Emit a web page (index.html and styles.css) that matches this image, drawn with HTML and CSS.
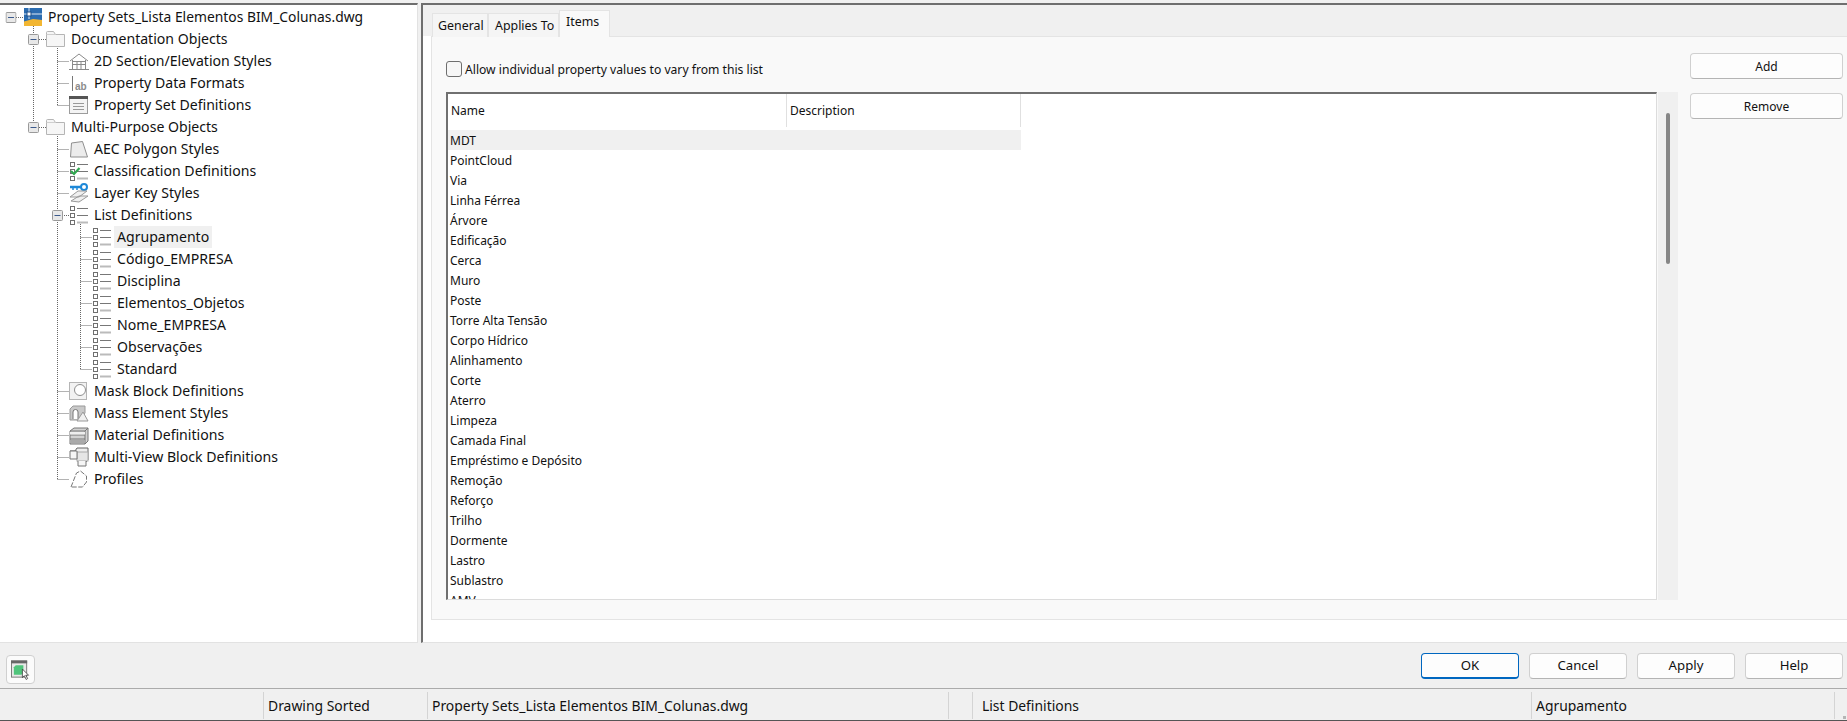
FILE: index.html
```html
<!DOCTYPE html>
<html lang="en">
<head>
<meta charset="utf-8">
<title>Style Manager</title>
<link rel="stylesheet" href="styles.css">
</head>
<body>
<svg class="defs" width="0" height="0" aria-hidden="true">
  <symbol id="i-folder" viewBox="0 0 20 16"><path d="M.5 15.5V1.5a1 1 0 0 1 1-1h6l2 3h9a1 1 0 0 1 0 0v12z" fill="#f6f6f6" stroke="#b5b5b5"/><path d="M.5 3.5h9" stroke="#cfcfcf" fill="none"/></symbol>
  <symbol id="i-list" viewBox="0 0 20 20"><g fill="#fff" stroke="#707070"><rect x="1.5" y="1.5" width="4" height="4"/><rect x="1.5" y="8.5" width="4" height="4"/><rect x="1.5" y="15.5" width="4" height="4"/></g><path d="M8 3.500h11M8 10.500h11" stroke="#777" fill="none"/><path d="M8 17.500h11" stroke="#bbb" stroke-width="2" fill="none"/></symbol>
  <symbol id="i-minus" viewBox="0 0 11 11"><rect x=".5" y=".5" width="10" height="10" rx="1" fill="#e8e8e8" stroke="#9a9a9a"/><path d="M2.500 5.500h6" stroke="#3c5a8c"/></symbol>
</svg>
<div class="app">
  <div class="main">
    <section class="tree">
      <svg class="connectors" width="100" height="490" aria-hidden="true">
        <g class="dots">
          <path d="M16 17.500h8M33.500 22v100M39 39.500h7M39 127.500h7"/>
          <path d="M57.500 48v57.500M57.500 61.500h12M57.500 83.500h12M57.500 105.500h12"/>
          <path d="M57.500 136v343.500M57.500 149.500h12M57.500 171.500h12M57.500 193.500h12M62 215.500h7M57.500 391.500h12M57.500 413.500h12M57.500 435.500h12M57.500 457.500h12M57.500 479.500h12"/>
          <path d="M80.500 224v145.500M80.500 237.500h12M80.500 259.500h12M80.500 281.500h12M80.500 303.500h12M80.500 325.500h12M80.500 347.500h12M80.500 369.500h12"/>
        </g>
        <use href="#i-minus" x="5.500" y="12" width="11" height="11"/>
        <use href="#i-minus" x="28" y="34" width="11" height="11"/>
        <use href="#i-minus" x="28" y="122" width="11" height="11"/>
        <use href="#i-minus" x="52" y="210" width="11" height="11"/>
      </svg>
      <ul class="rows">
        <li class="row lv0"><svg class="ico" viewBox="0 0 20 20"><rect width="18" height="18" y="1" fill="#2b6cb0"/><path d="M0 14.500l9-2.500 9 1v6H0z" fill="#f2b632"/><path d="M5 1v11M0 7h18" stroke="#dfe9f5" fill="none"/><rect x="3" y="5" width="4" height="4" fill="#fff" stroke="#1f4f88"/></svg><span class="lbl">Property Sets_Lista Elementos BIM_Colunas.dwg</span></li>
        <li class="row lv1"><svg class="ico"><use href="#i-folder" x="0" y="2" width="20" height="16"/></svg><span class="lbl">Documentation Objects</span></li>
        <li class="row lv2"><svg class="ico" viewBox="0 0 20 20" fill="none" stroke="#8a8a8a"><path d="M1 10l9-7 9 7M3.500 9v9M16.500 9v9M0 18.500h20M3 13.500h14M3 10.500h14M8 10v8M12 10v8" /></svg><span class="lbl">2D Section/Elevation Styles</span></li>
        <li class="row lv2"><svg class="ico" viewBox="0 0 20 20"><path d="M3.500 3v15" stroke="#777"/><text class="ab" x="6" y="17">ab</text></svg><span class="lbl">Property Data Formats</span></li>
        <li class="row lv2"><svg class="ico" viewBox="0 0 20 20"><rect x=".5" y="1.500" width="18" height="17" fill="#f4f4f4" stroke="#9c9c9c"/><rect x="0" y="1" width="19" height="3" fill="#555"/><path d="M4 8.500h11M4 11.500h11M4 14.500h11" stroke="#999"/></svg><span class="lbl">Property Set Definitions</span></li>
        <li class="row lv1"><svg class="ico"><use href="#i-folder" x="0" y="2" width="20" height="16"/></svg><span class="lbl">Multi-Purpose Objects</span></li>
        <li class="row lv2"><svg class="ico" viewBox="0 0 20 20"><path d="M1.500 18l1-14 11-1.500L18.500 18z" fill="#ececec" stroke="#8f8f8f"/></svg><span class="lbl">AEC Polygon Styles</span></li>
        <li class="row lv2"><svg class="ico" viewBox="0 0 20 20"><use href="#i-list" width="20" height="20"/><path d="M2 10l3 3 5.500-6" stroke="#2fa84f" stroke-width="2.200" fill="none"/></svg><span class="lbl">Classification Definitions</span></li>
        <li class="row lv2"><svg class="ico" viewBox="0 0 20 20"><path d="M1 4h11" stroke="#1e88d8" stroke-width="2.500"/><circle cx="15" cy="4" r="3" fill="#fff" stroke="#1e88d8" stroke-width="2"/><path d="M4 5v2M8 5v2" stroke="#1e88d8" stroke-width="1.500"/><path d="M1 14l8-6h9l-8 6zM2 18l8-5h9l-9 6z" fill="#f0f0f0" stroke="#999"/></svg><span class="lbl">Layer Key Styles</span></li>
        <li class="row lv2"><svg class="ico"><use href="#i-list" width="20" height="20"/></svg><span class="lbl">List Definitions</span></li>
        <li class="row lv3"><svg class="ico"><use href="#i-list" width="20" height="20"/></svg><span class="lbl sel">Agrupamento</span></li>
        <li class="row lv3"><svg class="ico"><use href="#i-list" width="20" height="20"/></svg><span class="lbl">Código_EMPRESA</span></li>
        <li class="row lv3"><svg class="ico"><use href="#i-list" width="20" height="20"/></svg><span class="lbl">Disciplina</span></li>
        <li class="row lv3"><svg class="ico"><use href="#i-list" width="20" height="20"/></svg><span class="lbl">Elementos_Objetos</span></li>
        <li class="row lv3"><svg class="ico"><use href="#i-list" width="20" height="20"/></svg><span class="lbl">Nome_EMPRESA</span></li>
        <li class="row lv3"><svg class="ico"><use href="#i-list" width="20" height="20"/></svg><span class="lbl">Observações</span></li>
        <li class="row lv3"><svg class="ico"><use href="#i-list" width="20" height="20"/></svg><span class="lbl">Standard</span></li>
        <li class="row lv2"><svg class="ico" viewBox="0 0 20 20"><rect x=".5" y="1.500" width="17" height="17" fill="#f2f2f2" stroke="#b5b5b5"/><circle cx="11" cy="9" r="5.500" fill="#fff" stroke="#8f8f8f"/></svg><span class="lbl">Mask Block Definitions</span></li>
        <li class="row lv2"><svg class="ico" viewBox="0 0 20 20"><path d="M1 17V6l3-3h12v7l-5 7z" fill="#c9c9c9" stroke="#999"/><path d="M4 16V9a2 2 0 0 1 5 0v7" fill="#fff" stroke="#777"/><path d="M14 9l-6 9h11z" fill="#f0f0f0" stroke="#999"/></svg><span class="lbl">Mass Element Styles</span></li>
        <li class="row lv2"><svg class="ico" viewBox="0 0 20 20"><path d="M1 6l4-3h14v13l-3 3H1z" fill="#d2d2d2" stroke="#777"/><path d="M1 6h15v13M16 6l3-3M1 10h15M1 14h15" fill="none" stroke="#777"/><rect x="1" y="7" width="15" height="2.500" fill="#eee"/><rect x="1" y="15" width="15" height="3" fill="#aaa"/></svg><span class="lbl">Material Definitions</span></li>
        <li class="row lv2"><svg class="ico" viewBox="0 0 20 20"><path d="M1 4h5l2-3h11v12l-3 3" fill="#eee" stroke="#666"/><rect x="8" y="5" width="11" height="9" fill="#e6e6e6" stroke="#aaa"/><path d="M1 4v8h7V4zM9 14v5h8v-5" fill="#f6f6f6" stroke="#777"/></svg><span class="lbl">Multi-View Block Definitions</span></li>
        <li class="row lv2"><svg class="ico" viewBox="0 0 20 20"><path d="M2 18L7.500 4l4-2 6 5v6l-4 5z" fill="#fff" stroke="#777" stroke-dasharray="5 1.500"/></svg><span class="lbl">Profiles</span></li>
      </ul>
    </section>
    <div class="divider"></div>
    <section class="detail">
      <nav class="tabs">
        <span class="tab">General</span>
        <span class="tab">Applies To</span>
        <span class="tab active">Items</span>
      </nav>
      <div class="page-wrap">
        <div class="page">
          <div class="content">
            <label class="check"><span class="box"></span>Allow individual property values to vary from this list</label>
            <div class="list-wrap">
              <div class="list">
                <div class="head"><span class="col col-name">Name</span><span class="col col-desc">Description</span></div>
                <div class="item selected">MDT</div>
                <div class="item">PointCloud</div>
                <div class="item">Via</div>
                <div class="item">Linha Férrea</div>
                <div class="item">Árvore</div>
                <div class="item">Edificação</div>
                <div class="item">Cerca</div>
                <div class="item">Muro</div>
                <div class="item">Poste</div>
                <div class="item">Torre Alta Tensão</div>
                <div class="item">Corpo Hídrico</div>
                <div class="item">Alinhamento</div>
                <div class="item">Corte</div>
                <div class="item">Aterro</div>
                <div class="item">Limpeza</div>
                <div class="item">Camada Final</div>
                <div class="item">Empréstimo e Depósito</div>
                <div class="item">Remoção</div>
                <div class="item">Reforço</div>
                <div class="item">Trilho</div>
                <div class="item">Dormente</div>
                <div class="item">Lastro</div>
                <div class="item">Sublastro</div>
                <div class="item">AMV</div>
              </div>
              <div class="scroll"><div class="thumb"></div></div>
            </div>
          </div>
          <div class="side">
            <button class="btn side-btn">Add</button>
            <button class="btn side-btn">Remove</button>
          </div>
        </div>
      </div>
    </section>
  </div>
  <footer class="footer">
    <button class="tool" aria-label="Viewer">
      <svg width="20" height="20" viewBox="0 0 20 20"><rect x=".5" y=".5" width="16" height="17" fill="#e8e8e8" stroke="#777"/><rect x="0" y="0" width="17" height="3" fill="#666"/><path d="M3 7l2-2h8v8l-2 2H3z" fill="#4fc47b"/><path d="M12 9v9l2-2 2 4 1.500-1-2-3.500h3z" fill="#fff" stroke="#333" stroke-width=".8"/></svg>
    </button>
    <div class="actions">
      <button class="btn act default">OK</button>
      <button class="btn act">Cancel</button>
      <button class="btn act">Apply</button>
      <button class="btn act">Help</button>
    </div>
  </footer>
  <div class="status">
    <span class="cell c1"></span>
    <span class="cell c2">Drawing Sorted</span>
    <span class="cell c3">Property Sets_Lista Elementos BIM_Colunas.dwg</span>
    <span class="cell c4"></span>
    <span class="cell c5">List Definitions</span>
    <span class="cell c6">Agrupamento</span>
    <span class="cell c7"><span class="grip"></span></span>
  </div>
</div>
</body>
</html>
```
FILE: styles.css
```css
* { box-sizing: border-box; }
html, body { margin: 0; padding: 0; height: 721px; overflow: hidden; background: #f0f0f0; }
body { font-family: "Noto Sans", "Open Sans", sans-serif; color: #111; }
.defs { position: absolute; }
.app { display: flex; flex-direction: column; height: 721px; padding-top: 3px; }
.main { display: flex; height: 640px; flex: none; }

/* tree */
.tree { position: relative; width: 418px; flex: none; background: #fff; border-top: 2px solid #6e6e6e; border-right: 1px solid #e2e2e2; border-bottom: 1px solid #e2e2e2; }
.connectors { position: absolute; left: 0; top: -5px; }
.dots { fill: none; stroke: #666; stroke-dasharray: 1 1; }
.rows { list-style: none; margin: 0; padding: 1px 0 0; position: relative; }
.row { display: flex; align-items: center; height: 22px; font-size: 14.1px; white-space: nowrap; }
.lv0 { padding-left: 24px; font-size: 13.85px; }
.lv1 { padding-left: 46px; }
.lv2 { padding-left: 69px; }
.lv3 { padding-left: 92px; }
.ico { width: 20px; height: 20px; flex: none; }
.ab { font-size: 10px; font-weight: 700; fill: #8c8c8c; font-family: "Liberation Sans", sans-serif; }
.lbl { margin-left: 2px; padding: 0 3px; line-height: 21px; height: 22px; }
.lv0 .lbl { margin-left: 1px; }
.sel { background: #f0f0f0; }

.divider { width: 3px; flex: none; background: #f0f0f0; }

/* detail */
.detail { flex: 1; display: flex; flex-direction: column; min-width: 0; background: #fff; border-left: 2px solid #6e6e6e; border-top: 2px solid #6e6e6e; border-bottom: 1px solid #e2e2e2; }
.tabs { display: flex; align-items: flex-end; height: 31px; padding-left: 8px; background: #f0f0f0; font-size: 12.4px; flex: none; white-space: nowrap; }
.tab { height: 24px; line-height: 23px; padding: 0 5px; background: #f5f5f5; border: 1px solid #e4e4e4; border-bottom: 0; position: relative; top: 1px; }
.tab:nth-child(1) { margin-left: 1px; width: 56px; }
.tab:nth-child(2) { width: 71px; padding-left: 6px; }
.tab.active { width: 51px; height: 27px; line-height: 22px; background: #f9f9f9; padding-left: 6px; z-index: 1; }

.page-wrap { flex: 1; padding-left: 8px; padding-bottom: 22px; background: #fff; display: flex; min-height: 0; }
.page { flex: 1; display: flex; background: #f9f9f9; border-top: 1px solid #e4e4e4; border-left: 1px solid #e4e4e4; border-bottom: 1px solid #e4e4e4; min-width: 0; }
.content { flex: 1; min-width: 0; padding: 24px 0 19px 14px; display: flex; flex-direction: column; }
.check { display: flex; align-items: center; height: 16px; font-size: 12.15px; flex: none; margin-bottom: 15px; }
.box { width: 16px; height: 16px; border: 1px solid #6e6e6e; border-radius: 3px; background: #f6f6f6; margin-right: 3px; flex: none; }
.list-wrap { flex: 1; display: flex; min-height: 0; }
.list { flex: 1; background: #fff; border-top: 2px solid #707070; border-left: 2px solid #707070; border-right: 1px solid #dcdcdc; border-bottom: 1px solid #dcdcdc; overflow: hidden; font-size: 12px; }
.head { display: flex; height: 36px; padding-bottom: 3px; }
.col { display: flex; align-items: center; border-right: 1px solid #e0e0e0; padding-left: 3px; }
.col-name { width: 339px; }
.col-desc { width: 234px; }
.item { width: 573px; height: 20px; line-height: 21px; padding-left: 2px; white-space: nowrap; }
.selected { background: #f0f0f0; }
.scroll { width: 20px; margin-left: 1px; background: #f0f0f0; padding: 21px 1px 0 0; display: flex; justify-content: center; flex: none; }
.thumb { width: 4px; height: 151px; border-radius: 2px; background: #868686; }

.side { width: 169px; flex: none; padding: 16px 4px 0 12px; display: flex; flex-direction: column; gap: 14px; }
.btn { font: inherit; font-size: 12px; color: #111; background: #fdfdfd; border: 1px solid #d0d0d0; border-bottom-color: #b4b4b4; border-radius: 4px; padding: 0; height: 26px; }
.side-btn { width: 153px; }

/* footer */
.footer { height: 46px; flex: none; display: flex; align-items: flex-start; justify-content: space-between; padding: 10px 4px 0 6px; border-bottom: 1px solid #ababab; background: #f0f0f0; }
.tool { width: 29px; height: 29px; margin-top: 2px; background: #fbfbfb; border: 1px solid #d0d0d0; border-radius: 4px; padding: 4px; display: flex; }
.actions { display: flex; gap: 10px; }
.act { width: 98px; font-size: 13.2px; padding-bottom: 2px; }
.default { border: 1px solid #0067c0; border-bottom-width: 2px; }

/* status */
.status { height: 32px; flex: none; display: flex; font-size: 13.9px; background: #f0f0f0; border-bottom: 1px solid #555; padding-top: 3px; }
.cell { height: 27px; line-height: 27px; border-right: 1px solid #d4d4d4; padding-left: 4px; white-space: nowrap; flex: none; }
.c1 { width: 264px; }
.c2 { width: 164px; }
.c3 { width: 521px; }
.c4 { width: 24px; }
.c5 { width: 559px; padding-left: 9px; }
.c6 { width: 303px; }
.c7 { flex: 1; border-right: 0; padding: 0 1px 0 0; display: flex; justify-content: flex-end; align-items: flex-end; }
.grip { width: 3px; height: 3px; background: #b5b5b5; }
```
